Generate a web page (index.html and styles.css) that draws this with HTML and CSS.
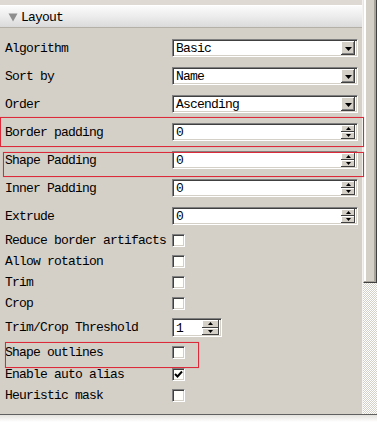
FILE: index.html
```html
<!DOCTYPE html>
<html>
<head>
<meta charset="utf-8">
<link rel="stylesheet" href="styles.css">
</head>
<body>
<div class="window">
  <div class="panel">
    <div class="topstrip"></div>
    <div class="header">
      <svg class="tri" width="10" height="9" viewBox="0 0 10 9"><path d="M0.5 0.5 H9.5 L5 8.5 Z" fill="#8e8e8e"/></svg>
      <span>Layout</span>
    </div>
    <div class="form">
      <div class="row tall">
        <span class="label">Algorithm</span>
        <div class="field combo"><span class="val">Basic</span><span class="dbtn"><svg width="7" height="4" viewBox="0 0 7 4"><path d="M0 0H7L3.5 4Z" fill="#000"/></svg></span></div>
      </div>
      <div class="row tall">
        <span class="label">Sort by</span>
        <div class="field combo"><span class="val">Name</span><span class="dbtn"><svg width="7" height="4" viewBox="0 0 7 4"><path d="M0 0H7L3.5 4Z" fill="#000"/></svg></span></div>
      </div>
      <div class="row tall">
        <span class="label">Order</span>
        <div class="field combo"><span class="val">Ascending</span><span class="dbtn"><svg width="7" height="4" viewBox="0 0 7 4"><path d="M0 0H7L3.5 4Z" fill="#000"/></svg></span></div>
      </div>
      <div class="row tall">
        <span class="label">Border padding</span>
        <div class="field spin"><span class="val">0</span><span class="sbtns"><span class="sbtn"><svg width="5" height="3" viewBox="0 0 5 3"><path d="M0 3H5L2.5 0Z" fill="#000"/></svg></span><span class="sbtn"><svg width="5" height="3" viewBox="0 0 5 3"><path d="M0 0H5L2.5 3Z" fill="#000"/></svg></span></span></div>
      </div>
      <div class="row tall">
        <span class="label">Shape Padding</span>
        <div class="field spin"><span class="val">0</span><span class="sbtns"><span class="sbtn"><svg width="5" height="3" viewBox="0 0 5 3"><path d="M0 3H5L2.5 0Z" fill="#000"/></svg></span><span class="sbtn"><svg width="5" height="3" viewBox="0 0 5 3"><path d="M0 0H5L2.5 3Z" fill="#000"/></svg></span></span></div>
      </div>
      <div class="row tall">
        <span class="label">Inner Padding</span>
        <div class="field spin"><span class="val">0</span><span class="sbtns"><span class="sbtn"><svg width="5" height="3" viewBox="0 0 5 3"><path d="M0 3H5L2.5 0Z" fill="#000"/></svg></span><span class="sbtn"><svg width="5" height="3" viewBox="0 0 5 3"><path d="M0 0H5L2.5 3Z" fill="#000"/></svg></span></span></div>
      </div>
      <div class="row tall">
        <span class="label">Extrude</span>
        <div class="field spin"><span class="val">0</span><span class="sbtns"><span class="sbtn"><svg width="5" height="3" viewBox="0 0 5 3"><path d="M0 3H5L2.5 0Z" fill="#000"/></svg></span><span class="sbtn"><svg width="5" height="3" viewBox="0 0 5 3"><path d="M0 0H5L2.5 3Z" fill="#000"/></svg></span></span></div>
      </div>
      <div class="row">
        <span class="label">Reduce border artifacts</span>
        <span class="check"></span>
      </div>
      <div class="row">
        <span class="label">Allow rotation</span>
        <span class="check"></span>
      </div>
      <div class="row">
        <span class="label">Trim</span>
        <span class="check"></span>
      </div>
      <div class="row">
        <span class="label">Crop</span>
        <span class="check"></span>
      </div>
      <div class="row thresh">
        <span class="label">Trim/Crop Threshold</span>
        <div class="field spin small"><span class="val">1</span><span class="sbtns"><span class="sbtn"><svg width="5" height="3" viewBox="0 0 5 3"><path d="M0 3H5L2.5 0Z" fill="#000"/></svg></span><span class="sbtn"><svg width="5" height="3" viewBox="0 0 5 3"><path d="M0 0H5L2.5 3Z" fill="#000"/></svg></span></span></div>
      </div>
      <div class="row outl">
        <span class="label">Shape outlines</span>
        <span class="check"></span>
      </div>
      <div class="row">
        <span class="label">Enable auto alias</span>
        <span class="check"><svg width="9" height="9" viewBox="0 0 9 9"><path d="M1 4 L3.5 6.5 L8 1.5" fill="none" stroke="#000" stroke-width="2"/></svg></span>
      </div>
      <div class="row">
        <span class="label">Heuristic mask</span>
        <span class="check"></span>
      </div>

      <div class="mark mark-border"></div>
      <div class="mark mark-shape"></div>
      <div class="mark mark-outline"></div>
    </div>
  </div>
  <div class="scrollbar">
    <div class="thumb"></div>
    <div class="track"></div>
  </div>
</div>
<div class="bottom"></div>
</body>
</html>
```
FILE: styles.css
```css
* { box-sizing: border-box; }
html, body {
  margin: 0;
  padding: 0;
  width: 377px;
  height: 422px;
  overflow: hidden;
  background: #d4d0c8;
  font-family: "Liberation Mono", "Courier New", monospace;
  font-size: 13px;
  letter-spacing: -0.8px;
  color: #000;
}
.window {
  display: flex;
  height: 414px;
}
.panel {
  width: 363px;
  display: flex;
  flex-direction: column;
  border-right: 1px solid #f4f2ee;
}
.topstrip {
  height: 5px;
  background: #dedad3;
}
.header {
  height: 23px;
  display: flex;
  align-items: center;
  padding-left: 8px;
  gap: 3px;
  background: linear-gradient(#fbfbfb, #ececec 50%, #dadada);
  border-top: 1px solid #ffffff;
  border-bottom: 1px solid #b4b0a8;
  line-height: 1;
}
.header span { padding-top: 1px; }
.tri { display: block; margin-top: 1px; }
.form {
  position: relative;
  padding-top: 6px;
  display: flex;
  flex-direction: column;
}
.row {
  display: flex;
  align-items: center;
  height: 21px;
}
.row.tall { height: 28px; }
.row.thresh { height: 27px; }
.row.outl { height: 23px; }
.label {
  width: 172px;
  padding-left: 5px;
  white-space: nowrap;
  line-height: 1;
}
.field {
  width: 186px;
  height: 18px;
  background: #fff;
  border-top: 1px solid #808080;
  border-left: 1px solid #808080;
  border-bottom: 1px solid #fff;
  border-right: 1px solid #fff;
  box-shadow: inset 1px 1px 0 #404040, inset -1px -1px 0 #d4d0c8;
  display: flex;
  align-items: center;
  padding: 1px 1px 1px 3px;
}
.field .val {
  flex: 1;
  line-height: 1;
  padding-top: 1px;
}
.dbtn {
  width: 14px;
  height: 14px;
  background: #d4d0c8;
  box-shadow: inset -1px -1px 0 #404040, inset 1px 1px 0 #fff, inset -2px -2px 0 #808080;
  display: flex;
  align-items: center;
  justify-content: center;
  margin-right: 1px;
}
.dbtn svg { display: block; margin-top: 1px; }
.sbtns {
  display: flex;
  flex-direction: column;
  width: 14px;
  height: 14px;
  margin-right: 1px;
}
.sbtn {
  flex: 1;
  background: #d4d0c8;
  box-shadow: inset -1px -1px 0 #404040, inset 1px 1px 0 #fff;
  display: flex;
  align-items: center;
  justify-content: center;
}
.sbtn svg { display: block; }
.field.small {
  width: 50px;
  height: 19px;
}
.field.small .sbtns {
  width: 17px;
  height: 15px;
  margin-right: 1px;
}
.check {
  width: 13px;
  height: 13px;
  background: #fffffb;
  border-top: 1px solid #808080;
  border-left: 1px solid #808080;
  border-bottom: 1px solid #fff;
  border-right: 1px solid #fff;
  box-shadow: inset 1px 1px 0 #404040, inset -1px -1px 0 #d4d0c8;
  display: flex;
  align-items: center;
  justify-content: center;
}
.check svg { display: block; }
.mark {
  position: absolute;
  border: 1px solid #dc2a3a;
  box-shadow: 0 0 1px rgba(230, 90, 100, 0.5);
  pointer-events: none;
}
.mark-border {
  left: 0;
  top: 89px;
  width: 364px;
  height: 30px;
}
.mark-shape {
  left: 3px;
  top: 124px;
  width: 361px;
  height: 25px;
}
.mark-outline {
  left: 5px;
  top: 314px;
  width: 194px;
  height: 26px;
}
.scrollbar {
  width: 14px;
  display: flex;
  flex-direction: column;
}
.thumb {
  height: 283px;
  background: #d4d0c8;
  border-left: 1px solid #e8e6e2;
  border-right: 1px solid #404040;
  border-bottom: 1px solid #404040;
  box-shadow: inset -2px -1px 0 #a8a49c, inset 2px 0 0 #fff;
}
.track {
  flex: 1;
  background: repeating-conic-gradient(#d4d0c8 0 25%, #ffffff 0 50%) 0 0 / 2px 2px;
}
.bottom {
  height: 8px;
  border-top: 1px solid #606060;
  background: linear-gradient(#e4e2de, #ffffff);
}
```
